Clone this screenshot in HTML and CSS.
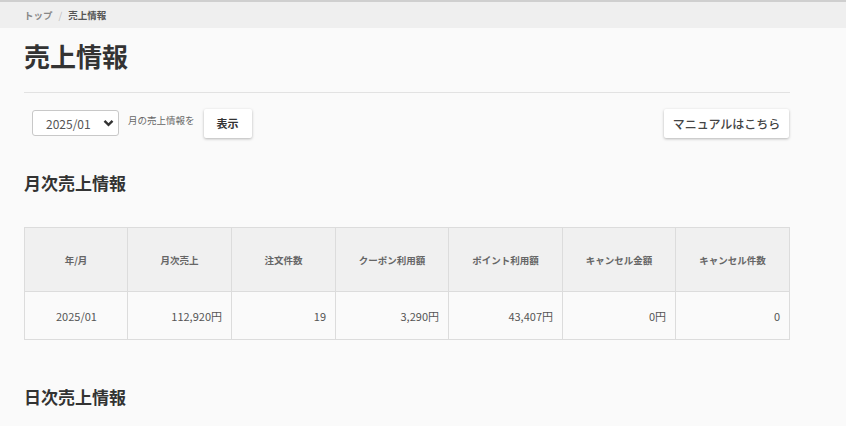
FILE: index.html
```html
<!DOCTYPE html>
<html lang="ja">
<head>
<meta charset="utf-8">
<title>売上情報</title>
<link rel="stylesheet" href="styles.css">
</head>
<body>
<div class="topbar"></div>
<nav class="breadcrumb">
  <span class="crumb-link">トップ</span><span class="crumb-sep">/</span><span class="crumb-current">売上情報</span>
</nav>
<main class="content">
  <h1 class="page-title">売上情報</h1>
  <div class="toolbar">
    <div class="toolbar-left">
      <div class="select">
        <span>2025/01</span>
        <svg class="chev" width="11" height="8" viewBox="0 0 11 8"><path d="M1.5 1.8 L5.5 5.8 L9.5 1.8" fill="none" stroke="#333" stroke-width="2.4"/></svg>
      </div>
      <span class="hint">月の売上情報を</span>
      <button class="btn">表示</button>
    </div>
    <button class="btn btn-manual">マニュアルはこちら</button>
  </div>
  <h2 class="section-title">月次売上情報</h2>
  <table class="sales">
    <colgroup>
      <col style="width:103px"><col style="width:104px"><col style="width:104px"><col style="width:113px"><col style="width:114px"><col style="width:113px"><col style="width:114px">
    </colgroup>
    <thead>
      <tr><th>年/月</th><th>月次売上</th><th>注文件数</th><th>クーポン利用額</th><th>ポイント利用額</th><th>キャンセル金額</th><th>キャンセル件数</th></tr>
    </thead>
    <tbody>
      <tr><td class="c">2025/01</td><td>112,920円</td><td>19</td><td>3,290円</td><td>43,407円</td><td>0円</td><td>0</td></tr>
    </tbody>
  </table>
  <h2 class="section-title daily">日次売上情報</h2>
</main>
</body>
</html>
```
FILE: styles.css
```css
* { box-sizing: border-box; }
html, body { margin: 0; padding: 0; }
body {
  background: #fafafa;
  font-family: "Noto Sans CJK JP", "Noto Sans", sans-serif;
  color: #333;
}
.topbar { height: 2px; background: #cfcfcf; }
.breadcrumb {
  height: 26px;
  background: #efefef;
  padding-left: 24px;
  display: flex;
  align-items: center;
  font-size: 9.5px;
  font-weight: bold;
}
.crumb-link { color: #888; }
.crumb-sep { color: #bbb; margin: 0 6px; font-weight: normal; }
.crumb-current { color: #555; }
.content { width: 790px; padding-left: 24px; }
.page-title {
  margin: 0;
  padding-top: 12px;
  height: 65px;
  font-size: 26px;
  line-height: 32px;
  font-weight: bold;
  color: #333;
  border-bottom: 1px solid #e2e2e2;
}
.toolbar {
  display: flex;
  justify-content: space-between;
  align-items: center;
  margin-top: 15px;
  height: 30px;
}
.toolbar-left { display: flex; align-items: center; padding-left: 8px; }
.select {
  width: 87px;
  height: 26px;
  border: 1px solid #c8c8c8;
  border-radius: 3px;
  background: #fff;
  display: flex;
  align-items: center;
  justify-content: space-between;
  padding: 0 4px 0 13px;
  font-size: 12px;
  color: #555;
}
.hint { font-size: 9.5px; color: #666; margin-left: 9px; margin-right: 9px; margin-top: -6px; }
.btn {
  border: none;
  background: #fff;
  height: 29px;
  padding: 0 13px;
  font-family: inherit;
  font-size: 11px;
  font-weight: bold;
  color: #333;
  border-radius: 2px;
  box-shadow: 0 1px 3px rgba(0,0,0,0.28);
}
.btn-manual { width: 125px; padding: 0; font-size: 12px; font-weight: 500; color: #444; margin-right: 1px; }
.section-title {
  margin: 0;
  margin-top: 33px;
  font-size: 17px;
  line-height: 24px;
  font-weight: bold;
  color: #333;
}
.sales {
  margin-top: 32px;
  width: 766px;
  border-collapse: collapse;
  table-layout: fixed;
  background: #fafafa;
}
.sales th, .sales td { border: 1px solid #dcdcdc; }
.sales th {
  height: 64px;
  background: #f0f0f0;
  font-size: 9.5px;
  font-weight: bold;
  color: #666;
  text-align: center;
}
.sales td {
  height: 48px;
  font-size: 11px;
  color: #555;
  text-align: right;
  padding-right: 9px;
}
.sales td.c { text-align: center; padding-right: 0; }
.section-title.daily { margin-top: 45px; }
```
